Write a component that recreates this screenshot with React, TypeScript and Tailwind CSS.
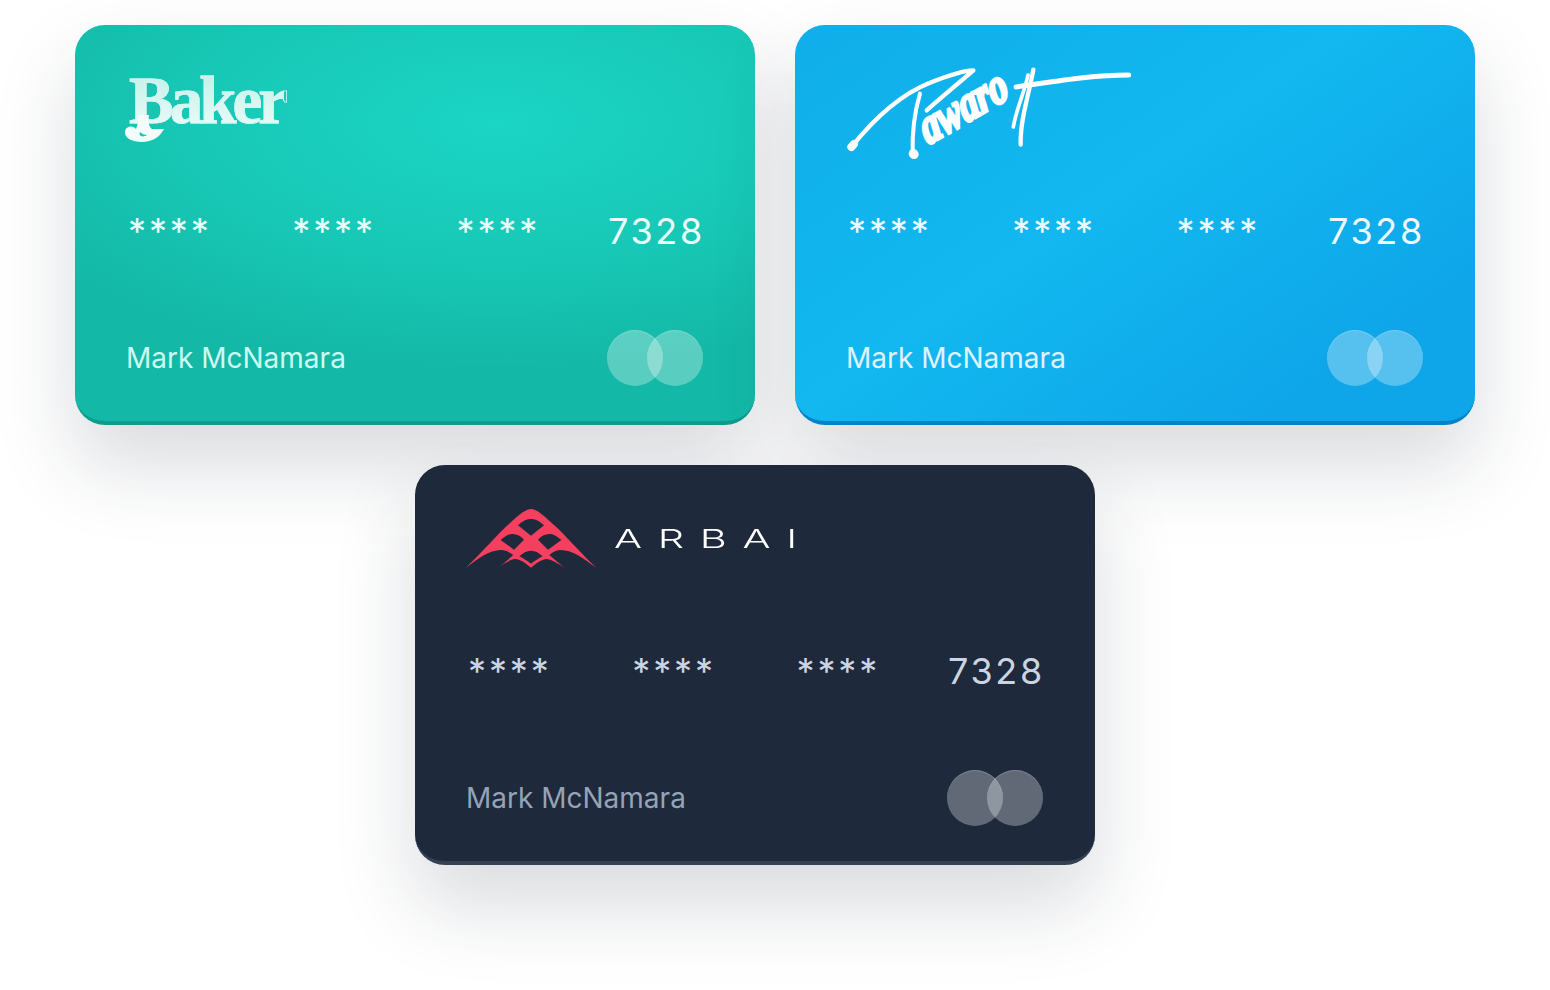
const BakerLogo = () => {
  return (
    <div className="relative w-[170px] h-[76px]">
      <p className="absolute left-[2px] top-[-13px] font-['Liberation_Serif',serif] font-bold text-[67px] leading-[88px] tracking-[-4px] text-transparent bg-clip-text bg-gradient-to-b from-[#b8eee6] to-[#f4fdfb] [-webkit-text-stroke:0.8px_#d4f5f0]">
        Baker
      </p>
      <svg className="absolute left-[-3px] top-[46px]" width="44" height="28" viewBox="0 0 44 28">
        <path
          d="M14 0 L25 0 C24 8 25 12 28 14 L40 14 C36 22 28 27 18 27 C8 27 0 23 1 16 C2 11 9 10 12 14 C14 10 14 5 14 0 Z M16 17 C14 21 19 23 23 20 C20 20 18 19 16 17 Z"
          fillRule="evenodd"
          fill="#f2fcfa"
        />
      </svg>
    </div>
  );
};

const PavarottLogo = () => {
  return (
    <svg width="290" height="100" viewBox="50 40 870 300" className="ml-[-1px] mt-[-6px] overflow-visible">
      <g fill="none" stroke="white" strokeLinecap="round" strokeLinejoin="round">
        <path d="M66 292 C120 225 200 140 300 100 C350 80 400 62 432 62 C400 90 340 140 292 182" strokeWidth="13" />
        <path d="M272 132 C255 190 248 250 250 312" strokeWidth="12" />
        <path d="M252 312 L254 314" strokeWidth="28" />
        <path d="M66 292 L74 283" strokeWidth="24" />
        <path d="M612 60 C600 130 572 210 574 285" strokeWidth="13" />
        <path d="M596 76 C585 130 560 180 552 232" strokeWidth="11" />
        <path d="M560 112 C680 95 780 76 898 76" strokeWidth="15" />
      </g>
      <text
        x="0"
        y="0"
        transform="translate(296 286) rotate(-30) skewX(-6) scale(1.2 1.6)"
        fill="white"
        stroke="white"
        strokeWidth="6"
        className="font-['Liberation_Serif',serif] italic font-bold text-[94px]"
      >
        awaro
      </text>
    </svg>
  );
};

const ArbaiLogo = () => {
  return (
    <div className="flex flex-row items-center ml-[-1px]">
      <svg width="130" height="59" viewBox="50 42 390 177">
        <path
          fillRule="evenodd"
          fill="#f43f5e"
          d="M245 42 C262 42 282 60 325 100 C365 140 405 185 440 218 C405 192 370 165 335 165 C322 165 312 170 300 180 L345 218 C325 205 308 194 293 192 C275 194 262 204 245 218 C228 204 215 194 197 192 C182 194 165 205 148 218 L192 180 C178 170 168 165 155 165 C120 165 85 192 50 218 C85 185 125 140 165 100 C208 60 228 42 245 42 Z M245 72 C230 72 218 80 206 91 L245 122 L284 91 C272 80 260 72 245 72 Z M190 117 C176 117 166 125 154 135 L194 164 L224 134 C214 124 204 117 190 117 Z M300 117 C286 117 276 124 266 134 L296 164 L336 135 C324 125 314 117 300 117 Z M245 167 C232 167 220 174 210 184 C222 190 234 198 245 206 C256 198 268 190 280 184 C270 174 258 167 245 167 Z"
        />
      </svg>
      <p className="ml-[18px] font-['Inter',sans-serif] font-light text-[26px] leading-none tracking-[9.8px] text-white origin-left scale-x-[1.6] whitespace-nowrap">
        ARBAI
      </p>
    </div>
  );
};

type CardProps = {
  className: string;
  numberColor: string;
  nameColor: string;
  circleColor: string;
  logo: React.ReactNode;
};

const PaymentCard = ({ className, numberColor, nameColor, circleColor, logo }: CardProps) => {
  return (
    <div
      className={`w-[680px] h-[400px] shrink-0 rounded-[30px] border-b-4 px-[52px] pt-[44px] shadow-[0_40px_80px_rgba(30,41,59,0.17)] font-['Inter',sans-serif] ${className}`}
    >
      <div className="h-[76px] flex items-start">{logo}</div>
      <div className={`mt-[50px] h-[72px] flex flex-row justify-between items-center ${numberColor}`}>
        <div className="flex flex-row gap-[80.5px] pl-[1px] text-[36px] leading-[72px] tracking-[2.9px]">
          <span>****</span>
          <span>****</span>
          <span>****</span>
        </div>
        <span className="text-[36px] leading-[72px] tracking-[2.7px] -mr-[2px]">7328</span>
      </div>
      <div className="mt-[63px] flex flex-row justify-between items-center">
        <p className={`text-[28px] leading-[56px] -ml-px ${nameColor}`}>Mark McNamara</p>
        <div className="flex flex-row">
          <div className={`w-14 h-14 rounded-full shadow-[inset_0_1px_0_rgba(255,255,255,0.2)] ${circleColor}`} />
          <div className={`w-14 h-14 rounded-full -ml-4 shadow-[inset_0_1px_0_rgba(255,255,255,0.2)] ${circleColor}`} />
        </div>
      </div>
    </div>
  );
};

export default function App() {
  return (
    <div className="w-[1550px] h-[990px] bg-white overflow-hidden pt-[25px] flex flex-col gap-10">
      <div className="flex flex-row justify-center gap-10">
        <PaymentCard
          className="border-[#0d9c8d] bg-[radial-gradient(ellipse_80%_62%_at_62%_25%,#1bd5c5_0%,#18c8b6_55%,#14b8a6_100%)]"
          numberColor="text-[#ecfdf9]"
          nameColor="text-[#ccfbf1]"
          circleColor="bg-white/30"
          logo={<BakerLogo />}
        />
        <PaymentCard
          className="border-[#0284c7] bg-[linear-gradient(145deg,#10aeea_0%,#12b8ef_45%,#0ea5e9_85%)]"
          numberColor="text-[#f0f9ff]"
          nameColor="text-[#e0f2fe]"
          circleColor="bg-white/30"
          logo={<PavarottLogo />}
        />
      </div>
      <div className="flex flex-row justify-center pr-10">
        <PaymentCard
          className="border-[#334155] bg-[#1e293b]"
          numberColor="text-[#cbd5e1]"
          nameColor="text-[#94a3b8]"
          circleColor="bg-white/30"
          logo={<ArbaiLogo />}
        />
      </div>
    </div>
  );
}
